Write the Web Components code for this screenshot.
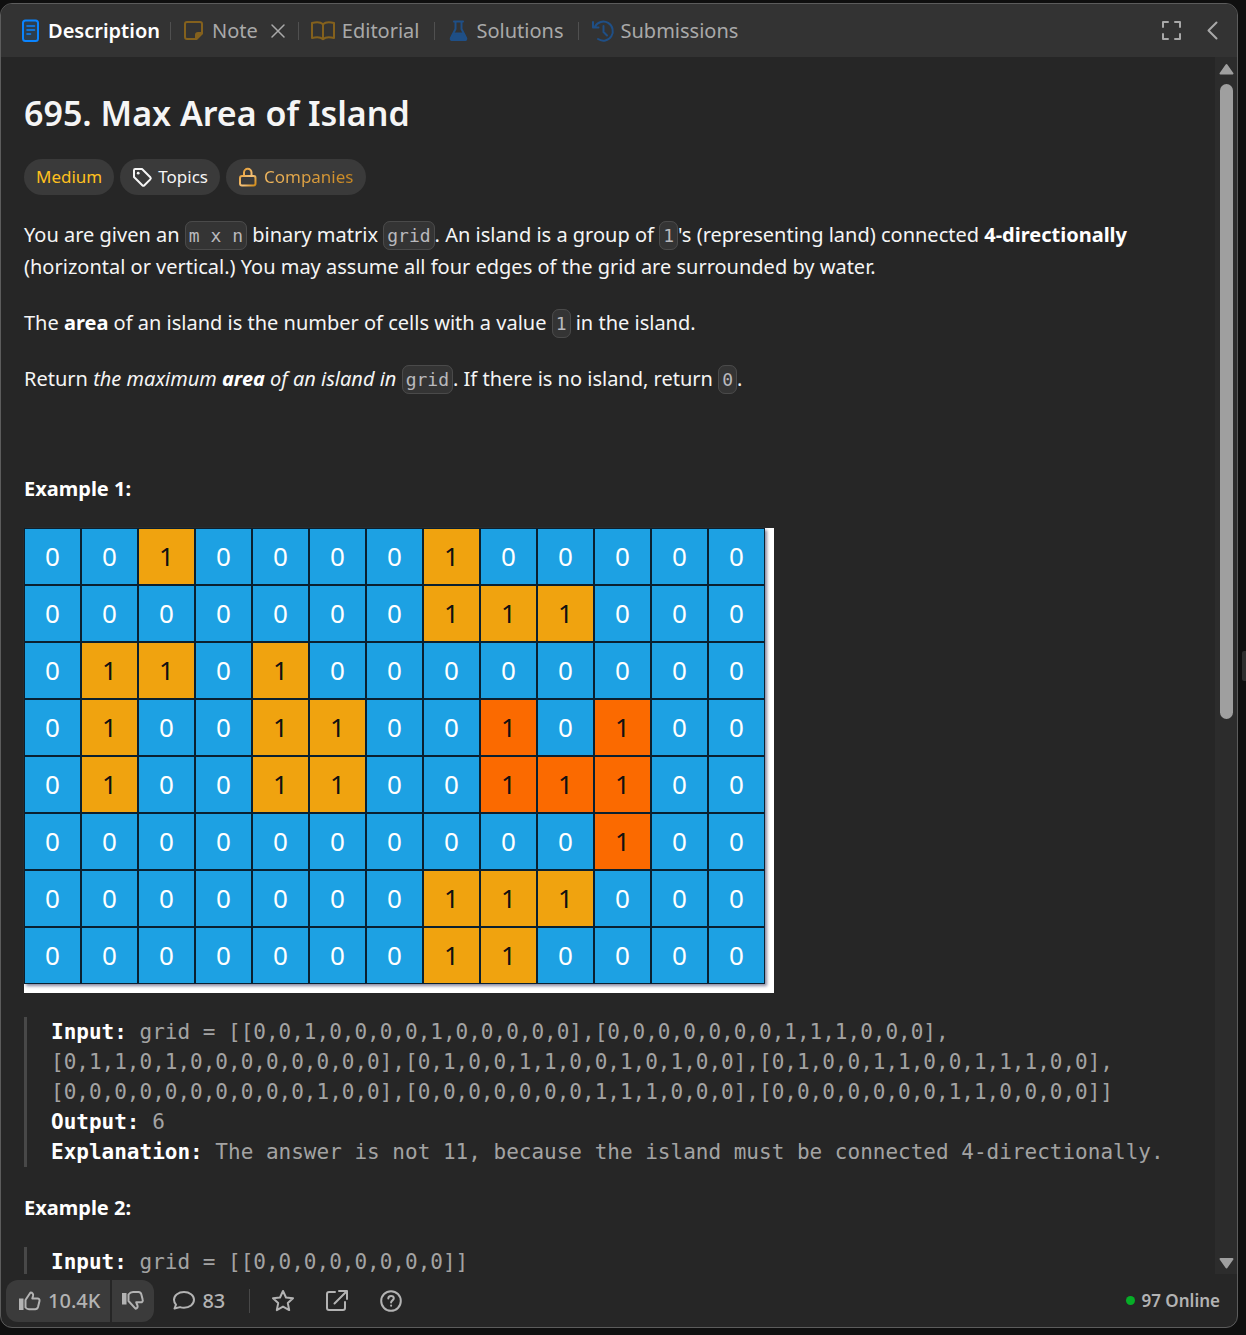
<!DOCTYPE html>
<html lang="en">
<head>
<meta charset="utf-8">
<title>Max Area of Island</title>
<style>
  html, body { height: 100%; margin: 0; }
  body { background: #0f0f0f; color: #f5f5f5; font: 20px/32px "Noto Sans", "Open Sans", sans-serif; overflow: hidden; }
</style>
</head>
<body>
<problem-page></problem-page>
<script>
const define = (name, html, setup) => {
  const tpl = document.createElement('template');
  tpl.innerHTML = html;
  customElements.define(name, class extends HTMLElement {
    constructor() {
      super();
      this.attachShadow({ mode: 'open' }).append(tpl.content.cloneNode(true));
    }
    connectedCallback() { if (setup) setup(this, this.shadowRoot); }
  });
};

const icons = {
  doc: '<rect x="4" y="0.500" width="15" height="20.500" rx="2.500" fill="#0a84ff22"/><path d="M8 6h7.500M8 10h7.500M8 14h3.500" stroke-width="1.600"/>',
  note: '<path d="M4 2h13a2 2 0 0 1 2 2v9.500l-5.500 5.500H4a2 2 0 0 1-2-2V4a2 2 0 0 1 2-2z"/><path d="M19 13l-6 6v-4a2 2 0 0 1 2-2z" fill="currentColor"/>',
  book: '<path d="M12 4.200C10 2.300 5 2 1 3v15c4-1 9-.7 11 1.200C14 17.300 19 17 23 18V3c-4-1-9-.7-11 1.200v15"/>',
  flask: '<path d="M6 1.500h9M7.500 2v7L2.800 18.300A1.200 1.200 0 0 0 3.900 20h13.200a1.200 1.200 0 0 0 1.100-1.700L13.500 9V2"/><path d="M5.500 13.500h10l2.700 5.500-1 1H3.900l-1-1z" fill="currentColor"/>',
  history: '<path d="M3 6.500A9.500 9.500 0 1 1 6 19M1 2v5.500h5.500M11.500 6v6l3.500 3.500"/>',
  close: '<path d="M2 2l12 12M14 2L2 14"/>',
  expand: '<path d="M2 7V2h5M14 2h5v5M19 14v5h-5M7 19H2v-5"/>',
  back: '<path d="M10.500 2.500L2.500 10.500 10.500 18.500"/>',
  tag: '<path d="M2 3.200A1.200 1.200 0 0 1 3.200 2H10l8.300 8.300a1.500 1.500 0 0 1 0 2.100l-5.900 5.900a1.500 1.500 0 0 1-2.100 0L2 10z"/><circle cx="6.200" cy="6.200" r="1.400" fill="currentColor" stroke="none"/>',
  lock: '<defs><linearGradient id="g" x1="0" y1="0" x2="1" y2="1"><stop stop-color="#e09526"/><stop offset=".6" stop-color="#f5c27a"/><stop offset="1" stop-color="#cf8813"/></linearGradient></defs><path d="M4 9h11.500a2 2 0 0 1 2 2v5.500a2 2 0 0 1-2 2H4a2 2 0 0 1-2-2V11a2 2 0 0 1 2-2M6 9V5.500a3.750 3.750 0 0 1 7.500 0V9" stroke="url(#g)"/>',
  up: '<path d="M1 8.500h4.500V20H1z" fill="currentColor" stroke="none"/><path d="M7.500 10L12.500 2.500c2 0 3 1.500 2.500 3.500l-.7 2.500h5.200a2 2 0 0 1 2 2.500l-1.500 6a3 3 0 0 1-3 2.200H11a4.500 4.500 0 0 1-3.500-1.700z"/>',
  down: '<path d="M1 3h4.500v11.500H1z" fill="currentColor" stroke="none"/><path d="M7.500 4.500C9 2.500 10.500 2 12 2h5.500a3 3 0 0 1 2.800 2.200l1.400 5.500a2 2 0 0 1-2 2.600h-4.500l1.300 3.200c.6 1.800-.5 3-2 3.200L7.500 11z"/>',
  chat: '<path d="M12 2C6.500 2 2 5.300 2 9.800c0 1.900.8 3.500 2 4.800L2.500 18.500l5.500-1.400c1.200.4 2.600.6 4 .6 5.500 0 10-3.400 10-7.900S17.500 2 12 2z"/>',
  star: '<path d="M12 2l3 6.500 7 .8-5.200 4.800 1.400 7L12 17.600 5.800 21.100l1.400-7L2 9.300l7-.8z"/>',
  share: '<path d="M10 3H4a2 2 0 0 0-2 2v14a2 2 0 0 0 2 2h14a2 2 0 0 0 2-2v-6M9.500 14.500L22 2M14 2h8v8"/>',
  help: '<circle cx="12" cy="12" r="9.800"/><path d="M9.300 9.500c0-3.500 5.500-3.300 5.500-.2 0 2-2.700 2.100-2.700 4.200M12.100 16.500v.2"/>'
};

/* <ui-icon name w h>: a stroked line icon, drawn one unit to a pixel */
define('ui-icon', `<style>
  :host { display: inline-flex; flex: none; }
  svg { display: block; fill: none; stroke: currentColor; stroke-width: var(--stroke, 2); stroke-linecap: round; stroke-linejoin: round; overflow: visible; }
</style><svg aria-hidden="true"></svg>`, (host, root) => {
  const w = host.getAttribute('w'), h = host.getAttribute('h'), svg = root.querySelector('svg');
  svg.setAttribute('width', w);
  svg.setAttribute('height', h);
  svg.setAttribute('viewBox', `0 0 ${w} ${h}`);
  svg.innerHTML = icons[host.getAttribute('name')];
});

define('tab-item', `<style>
  :host { display: flex; align-items: center; color: #a9a9a9; }
  :host([active]) { color: #fff; font-weight: 600; }
  button { all: unset; display: flex; align-items: center; gap: 7px; white-space: nowrap; cursor: pointer; }
</style><button type="button"><slot name="icon"></slot><slot></slot></button><slot name="extra"></slot>`);

define('tab-bar', `<style>
  :host { display: flex; align-items: center; height: 53px; padding: 0 19px 0 18px; background: #333; font-size: 20px; line-height: 28px; }
  i { width: 1px; height: 18px; background: #505050; margin: 0 12px 0 10px; }
  i.wide { margin: 0 13px 0 14px; }
  .gap { flex: 1; }
  button { all: unset; display: flex; color: #a9a9a9; cursor: pointer; }
  .close { margin: 0 2px 0 12px; --stroke: 1.5; }
  .back { margin-left: 24px; }
  .blue { color: #0a84ff; } .gold { color: #84611d; } .navy { color: #1f4f86; }
</style>
<tab-item active><ui-icon slot="icon" class="blue" name="doc" w="22" h="22"></ui-icon>Description</tab-item><i></i>
<tab-item><ui-icon slot="icon" class="gold" name="note" w="22" h="21"></ui-icon>Note<button slot="extra" class="close" aria-label="Close"><ui-icon name="close" w="16" h="16"></ui-icon></button></tab-item><i></i>
<tab-item><ui-icon slot="icon" class="gold" name="book" w="24" h="22"></ui-icon>Editorial</tab-item><i class="wide"></i>
<tab-item><ui-icon slot="icon" class="navy" name="flask" w="22" h="22"></ui-icon>Solutions</tab-item><i class="wide"></i>
<tab-item><ui-icon slot="icon" class="navy" name="history" w="22" h="22"></ui-icon>Submissions</tab-item>
<span class="gap"></span>
<button aria-label="Maximize"><ui-icon name="expand" w="21" h="21"></ui-icon></button>
<button class="back" aria-label="Fold"><ui-icon name="back" w="12" h="21"></ui-icon></button>`);

define('pill-button', `<style>
  :host { display: flex; }
  button { all: unset; box-sizing: border-box; height: 36px; padding: 0 12px; border-radius: 18px; background: #3a3a3a; display: flex; align-items: center; gap: 6px; font-size: 17px; line-height: 26px; white-space: nowrap; cursor: pointer; }
</style><button type="button"><slot></slot></button>`);

define('inline-code', `<style>
  :host { display: inline; }
  code { font: 18px/24px "DejaVu Sans Mono", monospace; color: #b9b9bd; background: #343434; border: 1px solid #4a4a4a; border-radius: 7px; padding: 3px 3px; }
</style><code><slot></slot></code>`);

define('example-block', `<style>
  :host { display: block; margin: 0 0 25px; }
  pre { margin: 0; border-left: 3px solid #484848; padding-left: 24px; font: 21px/30px "DejaVu Sans Mono", monospace; color: #a3a3a3; white-space: pre-wrap; }
  ::slotted(code-line) { display: block; }
</style><pre><slot></slot></pre>`);

/* <code-line label>: one line of an example, with an optional bold label */
define('code-line', `<style>
  :host { display: block; }
  b { color: #fff; }
</style><b></b><slot></slot>`, (host, root) => {
  root.querySelector('b').textContent = host.getAttribute('label') || '';
});

define('island-grid', `<style>
  :host { display: block; width: 750px; height: 465px; background: #fff; margin: 0 0 24px; }
  table { border-spacing: 0; box-shadow: 2px 2px 3px #8888a0; }
  td { box-sizing: border-box; width: 57px; height: 57px; padding: 0 0 2px; border: 1px solid #0a2030; background: #1da1e3; color: #fff; text-align: center; font-size: 26px; line-height: 32px; }
  .land { background: #f0a30f; color: #111; }
  .max { background: #fb6a00; color: #111; }
</style><table><tbody></tbody></table>`, (host, root) => {
  root.querySelector('tbody').innerHTML = host.getAttribute('rows').split(' ').map(r =>
    '<tr>' + [...r].map(c => c === '0' ? '<td>0</td>' : `<td class="${c === '2' ? 'max' : 'land'}">1</td>`).join('') + '</tr>').join('');
});

define('problem-body', `<style>
  :host { display: block; flex: 1; min-width: 0; padding: 36px 24px 0 23px; }
  h1 { margin: 0 0 26px; font-size: 34px; line-height: 40px; font-weight: 600; }
  .tags { display: flex; gap: 6px; margin-bottom: 24px; }
  .medium { color: #ffc01e; }
  .comp { background: linear-gradient(90deg, #f0b760, #c9871f); -webkit-background-clip: text; background-clip: text; color: transparent; }
  p { margin: 0 0 24px; }
  .blank { height: 30px; }
  .title { margin-bottom: 23px; }
  b { color: #fff; }
</style>
<h1>695. Max Area of Island</h1>
<div class="tags">
  <pill-button><span class="medium">Medium</span></pill-button>
  <pill-button><ui-icon name="tag" w="20" h="20"></ui-icon>Topics</pill-button>
  <pill-button><ui-icon name="lock" w="20" h="20"></ui-icon><span class="comp">Companies</span></pill-button>
</div>
<p>You are given an <inline-code>m x n</inline-code> binary matrix <inline-code>grid</inline-code>. An island is a group of <inline-code>1</inline-code>'s (representing land) connected <b>4-directionally</b> (horizontal or vertical.) You may assume all four edges of the grid are surrounded by water.</p>
<p>The <b>area</b> of an island is the number of cells with a value <inline-code>1</inline-code> in the island.</p>
<p>Return <em>the maximum <b>area</b> of an island in </em><inline-code>grid</inline-code>. If there is no island, return <inline-code>0</inline-code>.</p>
<p class="blank"></p>
<p class="title"><b>Example 1:</b></p>
<island-grid rows="0010000100000 0000000111000 0110100000000 0100110020200 0100110022200 0000000000200 0000000111000 0000000110000"></island-grid>
<example-block><code-line label="Input:"> grid = [[0,0,1,0,0,0,0,1,0,0,0,0,0],[0,0,0,0,0,0,0,1,1,1,0,0,0],</code-line><code-line>[0,1,1,0,1,0,0,0,0,0,0,0,0],[0,1,0,0,1,1,0,0,1,0,1,0,0],[0,1,0,0,1,1,0,0,1,1,1,0,0],</code-line><code-line>[0,0,0,0,0,0,0,0,0,0,1,0,0],[0,0,0,0,0,0,0,1,1,1,0,0,0],[0,0,0,0,0,0,0,1,1,0,0,0,0]]</code-line><code-line label="Output:"> 6</code-line><code-line label="Explanation:"> The answer is not 11, because the island must be connected 4-directionally.</code-line></example-block>
<p class="title"><b>Example 2:</b></p>
<example-block><code-line label="Input:"> grid = [[0,0,0,0,0,0,0,0]]</code-line></example-block>`);

define('scroll-rail', `<style>
  :host { display: flex; flex-direction: column; align-items: center; width: 22px; box-sizing: border-box; padding: 6px 0 5px; background: #2c2c2c; color: #9f9f9f; }
  svg { display: block; flex: none; fill: currentColor; stroke: currentColor; stroke-width: 2; stroke-linejoin: round; }
  .track { flex: 1; width: 13px; margin: 9px 0 4px; display: flex; flex-direction: column; }
  .thumb { flex: 25; border-radius: 7px; background: #9f9f9f; }
  .rest { flex: 21; }
</style>
<svg width="15" height="12"><path d="M7.500 2L13.500 10.500H1.500z"/></svg>
<div class="track"><div class="thumb"></div><div class="rest"></div></div>
<svg width="15" height="12"><path d="M7.500 10.500L13.500 2H1.500z"/></svg>`);

define('action-bar', `<style>
  :host { display: flex; align-items: center; height: 53px; padding: 0 17px 0 5px; color: #b3b3b3; font-size: 20px; line-height: 28px; }
  button { all: unset; display: flex; align-items: center; cursor: pointer; }
  .vote { height: 42px; padding: 0 10px 0 12px; gap: 6px; background: #3b3b3b; }
  .l { border-radius: 12px 0 0 12px; margin-right: 2px; font-weight: 500; }
  .r { border-radius: 0 12px 12px 0; padding: 0 9px; }
  .chat { margin-left: 18px; gap: 6px; font-weight: 500; }
  i { width: 1px; height: 24px; background: #484848; margin: 0 21px 0 24px; }
  .next { margin-left: 30px; }
  .online { margin-left: auto; display: flex; align-items: center; gap: 6px; font-size: 17px; font-weight: 600; }
  .dot { width: 9px; height: 9px; border-radius: 50%; background: #06ad27; }
</style>
<button class="vote l"><ui-icon name="up" w="24" h="22"></ui-icon>10.4K</button>
<button class="vote r" aria-label="Dislike"><ui-icon name="down" w="24" h="22"></ui-icon></button>
<button class="chat"><ui-icon name="chat" w="24" h="21"></ui-icon>83</button>
<i></i>
<button aria-label="Favorite"><ui-icon name="star" w="24" h="24"></ui-icon></button>
<button class="next" aria-label="Share"><ui-icon name="share" w="24" h="24"></ui-icon></button>
<button class="next" aria-label="Help"><ui-icon name="help" w="24" h="24"></ui-icon></button>
<span class="online"><span class="dot"></span>97 Online</span>`);

define('problem-page', `<style>
  :host { display: flex; height: 100%; box-sizing: border-box; padding: 3px 0 7px; }
  main { flex: 1; min-width: 0; display: flex; flex-direction: column; border: 1px solid #5c5c5c; border-radius: 12px; background: #262626; overflow: hidden; }
  tab-bar, action-bar { flex: none; }
  .view { flex: 1; min-height: 0; display: flex; overflow: hidden; }
  .view scroll-rail { flex: none; }
  .resizer { flex: none; width: 8px; display: flex; justify-content: flex-end; align-items: center; }
  .grip { width: 4px; height: 30px; border-radius: 2px 0 0 2px; background: #2f2f2f; }
</style>
<main>
  <tab-bar></tab-bar>
  <div class="view"><problem-body></problem-body><scroll-rail></scroll-rail></div>
  <action-bar></action-bar>
</main>
<div class="resizer"><div class="grip"></div></div>`);
</script>
</body>
</html>
